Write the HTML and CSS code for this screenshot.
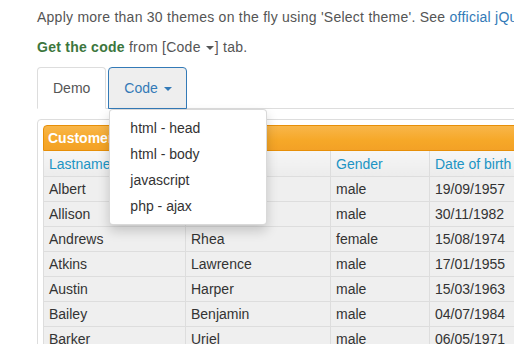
FILE: index.html
```html
<!DOCTYPE html>
<html>
<head>
<meta charset="utf-8">
<link rel="stylesheet" href="styles.css">
</head>
<body>
<div class="page">
  <p class="intro">Apply more than 30 themes on the fly using 'Select theme'. See <a class="link" href="#">official jQuery UI themes</a></p>
  <p class="intro"><strong class="green">Get the code</strong> from [Code <span class="caret"></span>] tab.</p>

  <div class="tabs-wrap">
    <ul class="nav-tabs">
      <li class="tab active"><a href="#">Demo</a></li>
      <li class="tab open"><a href="#">Code <span class="caret"></span></a>
        <ul class="dropdown">
          <li><a href="#">html - head</a></li>
          <li><a href="#">html - body</a></li>
          <li><a href="#">javascript</a></li>
          <li><a href="#">php - ajax</a></li>
        </ul>
      </li>
    </ul>

    <div class="panel">
      <div class="caption">Customers list</div>
      <table class="grid">
        <colgroup>
          <col class="c1"><col class="c2"><col class="c3"><col class="c4">
        </colgroup>
        <thead>
          <tr><th>Lastname</th><th>Firstname</th><th>Gender</th><th>Date of birth</th></tr>
        </thead>
        <tbody>
          <tr><td>Albert</td><td>Thomas</td><td>male</td><td>19/09/1957</td></tr>
          <tr><td>Allison</td><td>Nathan</td><td>male</td><td>30/11/1982</td></tr>
          <tr><td>Andrews</td><td>Rhea</td><td>female</td><td>15/08/1974</td></tr>
          <tr><td>Atkins</td><td>Lawrence</td><td>male</td><td>17/01/1955</td></tr>
          <tr><td>Austin</td><td>Harper</td><td>male</td><td>15/03/1963</td></tr>
          <tr><td>Bailey</td><td>Benjamin</td><td>male</td><td>04/07/1984</td></tr>
          <tr><td>Barker</td><td>Uriel</td><td>male</td><td>06/05/1971</td></tr>
        </tbody>
      </table>
    </div>
  </div>
</div>
</body>
</html>
```

FILE: styles.css
```css
html, body {
  margin: 0;
  padding: 0;
  background: #fff;
  overflow: hidden;
}
body {
  font-family: "Liberation Sans", Arial, sans-serif;
  font-size: 14px;
  line-height: 20px;
  color: #555;
}
.page {
  padding: 7px 0 0 37px;
  width: 700px;
}
.intro {
  margin: 0 0 10px 0;
  white-space: nowrap;
  letter-spacing: 0.25px;
}
.link {
  color: #337ab7;
  text-decoration: none;
}
.green {
  color: #3c763d;
}
.caret {
  display: inline-block;
  width: 0;
  height: 0;
  margin-left: 2px;
  vertical-align: middle;
  border-top: 4px solid;
  border-right: 4px solid transparent;
  border-left: 4px solid transparent;
}
.intro .caret {
  margin-left: 1px;
  margin-right: 1px;
}
.nav-tabs {
  list-style: none;
  margin: 0;
  padding: 0;
  display: flex;
  border-bottom: 1px solid #ddd;
  height: 41px;
}
.tab {
  position: relative;
  margin-right: 2px;
  margin-bottom: -1px;
}
.tab > a {
  display: block;
  padding: 10px 15px;
  line-height: 20px;
  border: 1px solid transparent;
  border-radius: 4px 4px 0 0;
  text-decoration: none;
}
.tab.active > a {
  color: #555;
  background: #fff;
  border-color: #ddd #ddd transparent;
}
.tab.open > a {
  color: #337ab7;
  background: #eee;
  border-color: #337ab7;
  padding-right: 14px;
}
.tab.open .caret {
  margin-left: 2px;
}
.dropdown {
  position: absolute;
  top: 100%;
  left: 1px;
  z-index: 10;
  list-style: none;
  margin: 0;
  padding: 5px 0;
  width: 158px;
  box-sizing: border-box;
  background: #fff;
  border: 1px solid rgba(0, 0, 0, 0.15);
  border-radius: 4px;
  box-shadow: 0 6px 12px rgba(0, 0, 0, 0.175);
}
.dropdown a {
  display: block;
  padding: 3px 20px;
  line-height: 20px;
  color: #333;
  text-decoration: none;
  white-space: nowrap;
}
.panel {
  margin-top: 10px;
  border: 1px solid #ddd;
  border-radius: 4px;
  padding: 5px;
  background: #fff;
  width: 640px;
}
.caption {
  height: 24px;
  line-height: 24px;
  padding: 0 4px;
  background: linear-gradient(#f8b64a, #f6a828 60%, #f3a126);
  border: 1px solid #e78f08;
  border-radius: 4px 4px 0 0;
  color: #fff;
  font-weight: bold;
}
.grid {
  border-collapse: collapse;
  table-layout: fixed;
  width: 100%;
}
.grid col.c1 { width: 142px; }
.grid col.c2 { width: 145px; }
.grid col.c3 { width: 99px; }
.grid col.c4 { width: auto; }
.grid th {
  height: 25px;
  padding: 0 5px;
  text-align: left;
  font-weight: normal;
  color: #1c94c4;
  background: linear-gradient(#f6f6f6, #ececec);
  border: 1px solid #ddd;
  border-top: none;
}
.grid td {
  height: 24px;
  padding: 0 5px;
  color: #333;
  background: #efefef;
  border: 1px solid #ddd;
  white-space: nowrap;
}
```
